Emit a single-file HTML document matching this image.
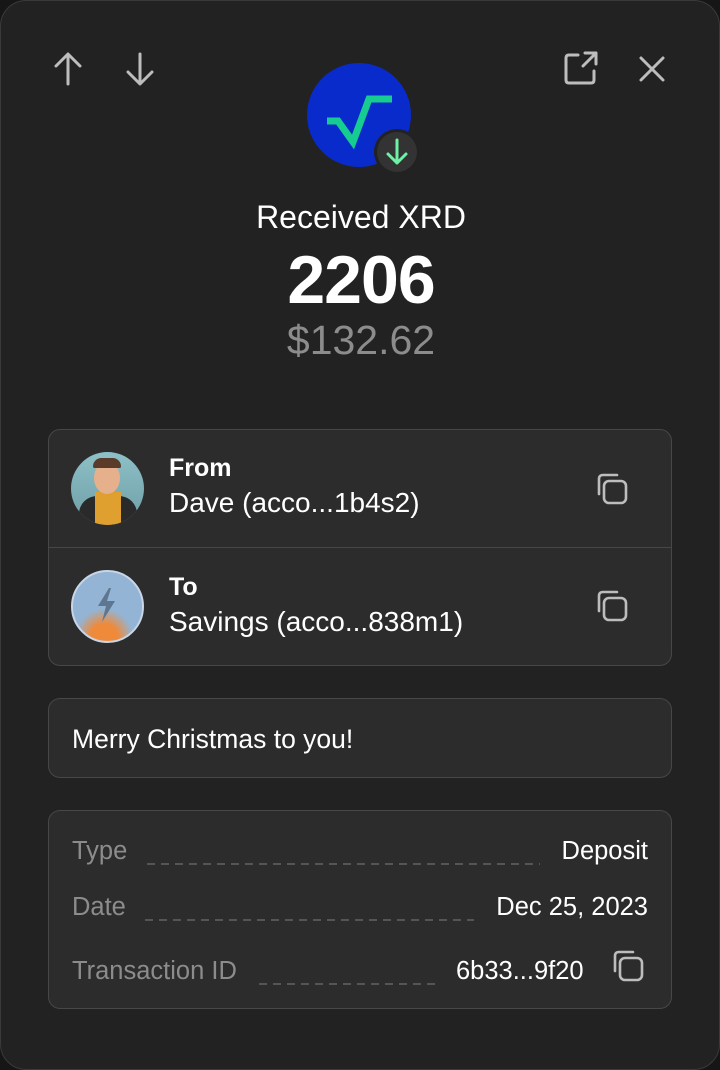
<!DOCTYPE html>
<html><head><meta charset="utf-8"><style>
*{box-sizing:border-box;margin:0;padding:0}
body{width:720px;height:1058px;background:#161616;font-family:"Liberation Sans",sans-serif;color:#fff;overflow:hidden}
.sheet{position:absolute;left:0;top:0;width:720px;height:1070px;background:#222;border-radius:26px;border:1px solid #3a3a3a}
.ic{position:absolute}
.card{position:absolute;left:47px;width:624px;background:#2c2c2c;border:1.5px solid #474747;border-radius:12px}
.lbl{color:#8c8c8c;font-size:25.5px}
.val{font-size:25.5px}
.dash{position:absolute;height:1.5px;background:repeating-linear-gradient(90deg,#555 0 8px,transparent 8px 14px)}
</style></head><body>
<div class="sheet">
<svg class="ic" style="left:50px;top:50px" width="34" height="36" viewBox="0 0 34 36"><path d="M17 33V4M5 15L17 3L29 15" stroke="#bdbdbd" stroke-width="3" fill="none" stroke-linecap="round" stroke-linejoin="round"/></svg>
<svg class="ic" style="left:122px;top:50px" width="34" height="36" viewBox="0 0 34 36"><path d="M17 3V32M5 21L17 33L29 21" stroke="#bdbdbd" stroke-width="3" fill="none" stroke-linecap="round" stroke-linejoin="round"/></svg>
<svg class="ic" style="left:562px;top:50px" width="36" height="36" viewBox="0 0 36 36"><path d="M15 4H6Q3 4 3 7V29Q3 32 6 32H28Q31 32 31 29V20M20 15L33 2M22 2H33V13" stroke="#bdbdbd" stroke-width="3" fill="none" stroke-linecap="round" stroke-linejoin="round"/></svg>
<svg class="ic" style="left:637px;top:54px" width="28" height="28" viewBox="0 0 28 28"><path d="M3 3L25 25M25 3L3 25" stroke="#bdbdbd" stroke-width="3" stroke-linecap="round"/></svg>
<svg class="ic" style="left:306px;top:62px" width="114" height="112" viewBox="0 0 114 112"><circle cx="52" cy="52" r="52" fill="#0a2bcc"/><path d="M20 58H31L46 79L62 36H85" stroke="#16cc91" stroke-width="7" fill="none" stroke-linejoin="miter"/><circle cx="90" cy="89" r="23" fill="#222"/><circle cx="90" cy="89" r="20" fill="#333"/><path d="M90 77V100M81 91L90 100L99 91" stroke="#6ef0a5" stroke-width="3" fill="none" stroke-linecap="round" stroke-linejoin="round"/></svg>
<div style="position:absolute;top:198px;width:720px;text-align:center;font-size:32px">Received XRD</div>
<div style="position:absolute;top:240px;width:720px;text-align:center;font-size:68px;font-weight:bold;letter-spacing:-1px">2206</div>
<div style="position:absolute;top:316px;width:720px;text-align:center;font-size:41px;color:#8c8c8c">$132.62</div>

<div class="card" style="top:428px;height:237px">
 <div style="position:absolute;left:0;right:0;top:117px;border-top:1.5px solid #474747"></div>
 <div style="position:absolute;left:22px;top:22px;width:73px;height:73px;border-radius:50%;overflow:hidden;background:linear-gradient(#8ec0c8,#6e9ea6)">
  <div style="position:absolute;left:8px;top:44px;width:58px;height:40px;border-radius:18px 18px 0 0;background:#2a2a2a"></div>
  <div style="position:absolute;left:24px;top:40px;width:26px;height:40px;background:#e0a030"></div>
  <div style="position:absolute;left:23px;top:10px;width:26px;height:32px;border-radius:50%;background:#e6b08c"></div>
  <div style="position:absolute;left:22px;top:6px;width:28px;height:10px;border-radius:10px 10px 2px 2px;background:#5a3a28"></div>
 </div>
 <div style="position:absolute;left:120px;top:24px;font-size:25px;font-weight:bold">From</div>
 <div style="position:absolute;left:120px;top:57px;font-size:28px">Dave (acco...1b4s2)</div>
 <div style="position:absolute;left:22px;top:140px;width:73px;height:73px;border-radius:50%;border:2.5px solid #c8d6e8;background:radial-gradient(circle at 45% 95%,#ef8a3a 0 18%,transparent 38%),#93b4d4"></div>
 <svg class="ic" style="left:44px;top:156px" width="28" height="38" viewBox="0 0 28 38"><path d="M16 2L5 20H13L9 36L22 15H14L18 2Z" fill="#5f7690"/></svg>
 <div style="position:absolute;left:120px;top:143px;font-size:25px;font-weight:bold">To</div>
 <div style="position:absolute;left:120px;top:176px;font-size:28px">Savings (acco...838m1)</div>
 <svg class="ic" style="left:546px;top:42px" width="34" height="34" viewBox="0 0 34 34"><rect x="9" y="9" width="22" height="22" rx="5" stroke="#bdbdbd" stroke-width="2.6" fill="none"/><path d="M4 22V7Q4 3 8 3H22" stroke="#bdbdbd" stroke-width="2.6" fill="none" stroke-linecap="round"/></svg>
 <svg class="ic" style="left:546px;top:159px" width="34" height="34" viewBox="0 0 34 34"><rect x="9" y="9" width="22" height="22" rx="5" stroke="#bdbdbd" stroke-width="2.6" fill="none"/><path d="M4 22V7Q4 3 8 3H22" stroke="#bdbdbd" stroke-width="2.6" fill="none" stroke-linecap="round"/></svg>
</div>

<div class="card" style="top:697px;height:80px"><div style="position:absolute;left:23px;top:25px;font-size:26.5px">Merry Christmas to you!</div></div>

<div class="card" style="top:809px;height:199px">
 <div class="lbl" style="position:absolute;left:23px;top:26px">Type</div>
 <div class="dash" style="left:98px;width:393px;top:52px"></div>
 <div class="val" style="position:absolute;right:23px;top:26px">Deposit</div>
 <div class="lbl" style="position:absolute;left:23px;top:82px">Date</div>
 <div class="dash" style="left:96px;width:329px;top:108px"></div>
 <div class="val" style="position:absolute;right:23px;top:82px">Dec 25, 2023</div>
 <div class="lbl" style="position:absolute;left:23px;top:146px">Transaction ID</div>
 <div class="dash" style="left:210px;width:182px;top:172px"></div>
 <div class="val" style="position:absolute;left:407px;top:146px">6b33...9f20</div>
 <svg class="ic" style="left:562px;top:138px" width="34" height="34" viewBox="0 0 34 34"><rect x="9" y="9" width="22" height="22" rx="5" stroke="#bdbdbd" stroke-width="2.6" fill="none"/><path d="M4 22V7Q4 3 8 3H22" stroke="#bdbdbd" stroke-width="2.6" fill="none" stroke-linecap="round"/></svg>
</div>
</div>
</body></html>
